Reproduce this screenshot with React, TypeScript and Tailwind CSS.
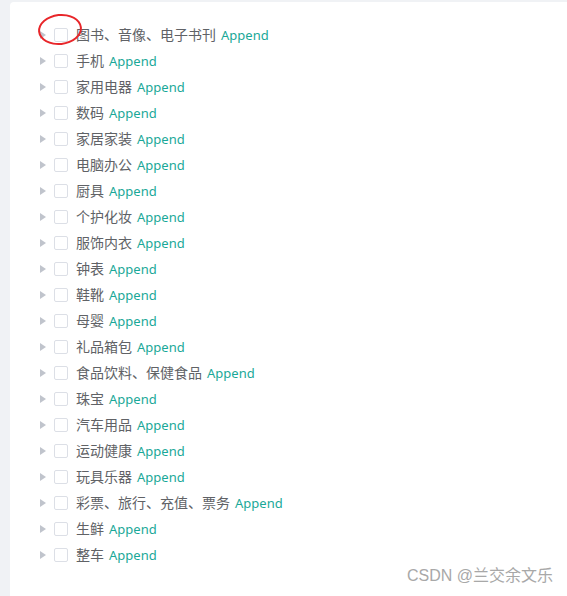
const categories = [
  "图书、音像、电子书刊",
  "手机",
  "家用电器",
  "数码",
  "家居家装",
  "电脑办公",
  "厨具",
  "个护化妆",
  "服饰内衣",
  "钟表",
  "鞋靴",
  "母婴",
  "礼品箱包",
  "食品饮料、保健食品",
  "珠宝",
  "汽车用品",
  "运动健康",
  "玩具乐器",
  "彩票、旅行、充值、票务",
  "生鲜",
  "整车",
];

const font = "font-['Microsoft_YaHei','Noto_Sans','Noto_Sans_CJK_SC',sans-serif]";

export default function App() {
  return (
    <div className={`h-[596px] overflow-hidden bg-[#f0f2f5] pl-[10px] pt-[2px] ${font}`}>
      <div className="relative h-full rounded-tl-[4px] bg-white pt-[20px] pl-[30px]">
        {/* Tree */}
        <ul>
          {categories.map((name, i) => (
            <li key={name} className="flex h-[26px] items-center">
              <svg width="6" height="8" viewBox="0 0 6 8" className="shrink-0">
                <path d="M0 0 L6 4 L0 8 Z" fill="#c0c4cc" />
              </svg>
              <span className="relative ml-[8px] h-[14px] w-[14px] shrink-0 rounded-[2px] border border-[#dcdfe6] bg-white">
                {i === 0 && (
                  <span className="absolute left-[-17px] top-[-15px] h-[31px] w-[44px] -rotate-[6deg] rounded-[50%] border-[2.5px] border-[#e8262a]" />
                )}
              </span>
              <span className="ml-[8px] text-[14px] leading-none text-[#606266]">{name}</span>
              <span className="ml-[5px] text-[13px] leading-none text-[#1aa898]">Append</span>
            </li>
          ))}
        </ul>

        {/* watermark */}
        <div className="absolute bottom-[8px] right-[14px] text-[16px] text-[#a8a8a8] font-['Liberation_Sans','Noto_Sans_CJK_SC',sans-serif]">
          CSDN @兰交余文乐
        </div>
      </div>
    </div>
  );
}
